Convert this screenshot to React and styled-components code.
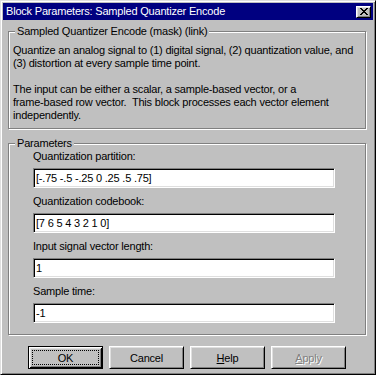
import React from 'react';
import styled, { createGlobalStyle } from 'styled-components';

const GlobalStyle = createGlobalStyle`
  html, body {
    margin: 0;
    padding: 0;
    background: #c0c0c0;
  }
  body {
    font-family: "Liberation Sans", Arial, sans-serif;
    font-size: 11px;
    letter-spacing: -0.2px;
    color: #000;
  }
`;

const Window = styled.div`
  box-sizing: border-box;
  width: 376px;
  height: 375px;
  padding: 2px;
  background: #c0c0c0;
  border: 1px solid;
  border-color: #dfdfdf #000 #000 #dfdfdf;
  box-shadow: inset 1px 1px #fff, inset -1px -1px #808080;
  display: flex;
  flex-direction: column;
`;

const Caption = styled.div`
  height: 17px;
  flex: none;
  background: #000080;
  color: #fff;
  display: flex;
  align-items: center;
  justify-content: space-between;
  padding: 0 2px 0 3px;
  font-size: 11px;
  line-height: 17px;
  white-space: nowrap;
`;

const CloseButton = styled.div`
  box-sizing: border-box;
  width: 15px;
  height: 12px;
  background: #c0c0c0;
  border: 1px solid;
  border-color: #fff #000 #000 #fff;
  box-shadow: inset 1px 1px #dfdfdf, inset -1px -1px #808080;
  display: flex;
  align-items: center;
  justify-content: center;
`;

const Body = styled.div`
  flex: 1;
  display: flex;
  flex-direction: column;
  padding: 5px 7px 0 5px;
`;

const Group = styled.fieldset`
  margin: 0 0 ${p => p.$gap || 0}px;
  padding: 0;
  min-width: 0;
  border: 1px solid #808080;
  box-shadow: inset 1px 1px #fff, 1px 1px #fff;
`;

const Legend = styled.legend`
  margin-left: 6px;
  padding: 0 2px;
  line-height: 13px;
  background: #c0c0c0;
`;

const Description = styled.div`
  padding: 6px 4px 6px 4px;
  line-height: 13px;
`;

const Para = styled.p`
  margin: 0 0 13px;
  white-space: nowrap;
  &:last-child {
    margin-bottom: 0;
  }
`;

const Fields = styled.div`
  display: flex;
  flex-direction: column;
  gap: 7px;
  padding: 0 0 11px 24px;
`;

const Field = styled.label`
  display: flex;
  flex-direction: column;
  gap: 5px;
  line-height: 13px;
`;

const TextBox = styled.input`
  box-sizing: border-box;
  width: 302px;
  height: 20px;
  margin: 0;
  padding: 0 2px;
  font: inherit;
  letter-spacing: inherit;
  color: #000;
  background: #fff;
  border: 1px solid;
  border-color: #808080 #fff #fff #808080;
  box-shadow: inset 1px 1px #000, inset -1px -1px #dfdfdf;
  outline: none;
`;

const ButtonRow = styled.div`
  display: flex;
  justify-content: center;
  gap: 6px;
  margin-top: 11px;
`;

const Button = styled.button`
  box-sizing: border-box;
  width: 75px;
  height: 23px;
  padding: 0;
  background: #c0c0c0;
  font: inherit;
  letter-spacing: inherit;
  color: ${p => (p.disabled ? '#808080' : '#000')};
  text-shadow: ${p => (p.disabled ? '1px 1px 0 #fff' : 'none')};
  display: flex;
  align-items: center;
  justify-content: center;
  border: 1px solid;
  border-color: ${p => (p.$default ? '#000' : '#fff #000 #000 #fff')};
  box-shadow: ${p =>
    p.$default
      ? 'inset 1px 1px #fff, inset -1px -1px #000, inset 2px 2px #dfdfdf, inset -2px -2px #808080'
      : 'inset 1px 1px #dfdfdf, inset -1px -1px #808080'};
  cursor: default;
`;

const FocusRing = styled.span`
  box-sizing: border-box;
  width: 67px;
  height: 15px;
  border: 1px dotted #000;
  display: flex;
  align-items: center;
  justify-content: center;
`;

const Mnemonic = styled.u`
  text-decoration: underline;
`;

const CloseGlyph = () => (
  <svg width="8" height="7" viewBox="0 0 8 7" shapeRendering="crispEdges">
    <path
      fill="#000"
      d="M0 0h2v1H0zM6 0h2v1H6zM1 1h2v1H1zM5 1h2v1H5zM2 2h4v1H2zM3 3h2v1H3zM2 4h4v1H2zM1 5h2v1H1zM5 5h2v1H5zM0 6h2v1H0zM6 6h2v1H6z"
    />
  </svg>
);

const params = [
  { label: 'Quantization partition:', value: '[-.75 -.5 -.25 0 .25 .5 .75]' },
  { label: 'Quantization codebook:', value: '[7 6 5 4 3 2 1 0]' },
  { label: 'Input signal vector length:', value: '1' },
  { label: 'Sample time:', value: '-1' },
];

export default function App() {
  return (
    <>
      <GlobalStyle />
      <Window>
        <Caption>
          <span>Block Parameters: Sampled Quantizer Encode</span>
          <CloseButton>
            <CloseGlyph />
          </CloseButton>
        </Caption>
        <Body>
          <Group $gap={8}>
            <Legend>Sampled Quantizer Encode (mask) (link)</Legend>
            <Description>
              <Para>
                Quantize an analog signal to (1) digital signal, (2) quantization value, and
                <br />
                (3) distortion at every sample time point.
              </Para>
              <Para>
                The input can be either a scalar, a sample-based vector, or a
                <br />
                frame-based row vector.&nbsp; This block processes each vector element
                <br />
                independently.
              </Para>
            </Description>
          </Group>
          <Group>
            <Legend>Parameters</Legend>
            <Fields>
              {params.map(p => (
                <Field key={p.label}>
                  {p.label}
                  <TextBox readOnly value={p.value} />
                </Field>
              ))}
            </Fields>
          </Group>
          <ButtonRow>
            <Button $default>
              <FocusRing>OK</FocusRing>
            </Button>
            <Button>Cancel</Button>
            <Button>
              <span><Mnemonic>H</Mnemonic>elp</span>
            </Button>
            <Button disabled>
              <span><Mnemonic>A</Mnemonic>pply</span>
            </Button>
          </ButtonRow>
        </Body>
      </Window>
    </>
  );
}
